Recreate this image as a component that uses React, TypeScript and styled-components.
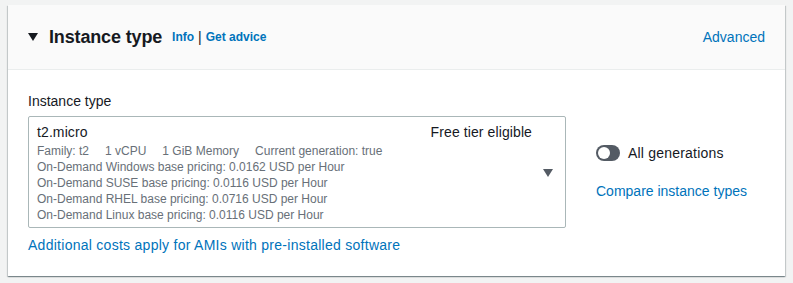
import styled, { createGlobalStyle } from 'styled-components';

const GlobalStyle = createGlobalStyle`
  html, body {
    margin: 0;
    padding: 0;
    background: #f2f3f3;
  }
  body {
    font-family: 'Liberation Sans', Arial, sans-serif;
    color: #16191f;
  }
`;

const Page = styled.div`
  padding: 5px 8px 9px 8px;
`;

const Card = styled.section`
  background: #ffffff;
  box-shadow: 0 1px 1px 0 rgba(0, 28, 36, 0.3), 1px 1px 1px 0 rgba(0, 28, 36, 0.15),
    -1px 1px 1px 0 rgba(0, 28, 36, 0.15);
`;

const Header = styled.header`
  display: flex;
  align-items: center;
  justify-content: space-between;
  height: 64px;
  padding: 0 20px;
  background: #fafafa;
  border-bottom: 1px solid #eaeded;
`;

const TitleGroup = styled.div`
  display: flex;
  align-items: center;
`;

const Caret = styled.span<{ $size: number }>`
  display: inline-block;
  width: 0;
  height: 0;
  border-left: ${(p) => p.$size / 2}px solid transparent;
  border-right: ${(p) => p.$size / 2}px solid transparent;
  border-top: ${(p) => Math.round(p.$size * 0.75)}px solid
    ${(p) => (p.$size > 10 ? '#16191f' : '#545b64')};
`;

const Title = styled.h2`
  margin: 0 10px 0 11px;
  font-size: 18px;
  line-height: 26px;
  font-weight: 700;
  letter-spacing: -0.15px;
  color: #16191f;
`;

const SmallLinks = styled.div`
  display: flex;
  align-items: center;
  gap: 4px;
  font-size: 12px;
  font-weight: 700;
  color: #0073bb;

  span {
    color: #16191f;
    font-weight: 400;
    font-size: 14px;
  }
`;

const Link = styled.a`
  color: #0073bb;
  font-size: 14px;
  line-height: 22px;
  text-decoration: none;
  cursor: pointer;
`;

const Body = styled.div`
  display: flex;
  align-items: flex-start;
  gap: 30px;
  padding: 20px;
`;

const Field = styled.div`
  display: flex;
  flex-direction: column;
  width: 538px;
`;

const Label = styled.label`
  font-size: 14px;
  line-height: 22px;
  color: #16191f;
  margin-bottom: 4px;
`;

const Select = styled.div`
  display: flex;
  align-items: center;
  border: 1px solid #aab7b8;
  border-radius: 2px;
  padding: 4px 12px 2px 8px;
  height: 104px;
`;

const Option = styled.div`
  flex: 1;
  display: flex;
  flex-direction: column;
  align-self: flex-start;
`;

const OptionTop = styled.div`
  display: flex;
  justify-content: space-between;
  font-size: 14px;
  line-height: 22px;
  letter-spacing: 0.1px;
  padding-right: 11px;
`;

const Desc = styled.div`
  font-size: 12px;
  line-height: 16px;
  color: #687078;
`;

const Tags = styled(Desc)`
  display: flex;
  gap: 16px;
`;

const Side = styled.div`
  display: flex;
  flex-direction: column;
  gap: 16px;
  padding-top: 52px;
`;

const ToggleRow = styled.label`
  display: flex;
  align-items: center;
  gap: 8px;
  font-size: 14px;
  line-height: 22px;
  letter-spacing: 0.2px;
`;

const Track = styled.span`
  position: relative;
  width: 24px;
  height: 16px;
  border-radius: 8px;
  background: #545b64;
`;

const Knob = styled.span`
  position: absolute;
  top: 2px;
  left: 2px;
  width: 12px;
  height: 12px;
  border-radius: 50%;
  background: #ffffff;
`;

const Footnote = styled(Link)`
  margin-top: 6px;
  letter-spacing: 0.27px;
`;

const pricing = [
  'On-Demand Windows base pricing: 0.0162 USD per Hour',
  'On-Demand SUSE base pricing: 0.0116 USD per Hour',
  'On-Demand RHEL base pricing: 0.0716 USD per Hour',
  'On-Demand Linux base pricing: 0.0116 USD per Hour',
];

export default function App() {
  return (
    <>
      <GlobalStyle />
      <Page>
        <Card>
          <Header>
            <TitleGroup>
              <Caret $size={11} />
              <Title>Instance type</Title>
              <SmallLinks>
                Info <span>|</span> Get advice
              </SmallLinks>
            </TitleGroup>
            <Link>Advanced</Link>
          </Header>
          <Body>
            <Field>
              <Label>Instance type</Label>
              <Select>
                <Option>
                  <OptionTop>
                    <span>t2.micro</span>
                    <span>Free tier eligible</span>
                  </OptionTop>
                  <Tags>
                    <span>Family: t2</span>
                    <span>1 vCPU</span>
                    <span>1 GiB Memory</span>
                    <span>Current generation: true</span>
                  </Tags>
                  {pricing.map((p) => (
                    <Desc key={p}>{p}</Desc>
                  ))}
                </Option>
                <Caret $size={10} />
              </Select>
              <Footnote>Additional costs apply for AMIs with pre-installed software</Footnote>
            </Field>
            <Side>
              <ToggleRow>
                <Track>
                  <Knob />
                </Track>
                All generations
              </ToggleRow>
              <Link>Compare instance types</Link>
            </Side>
          </Body>
        </Card>
      </Page>
    </>
  );
}
